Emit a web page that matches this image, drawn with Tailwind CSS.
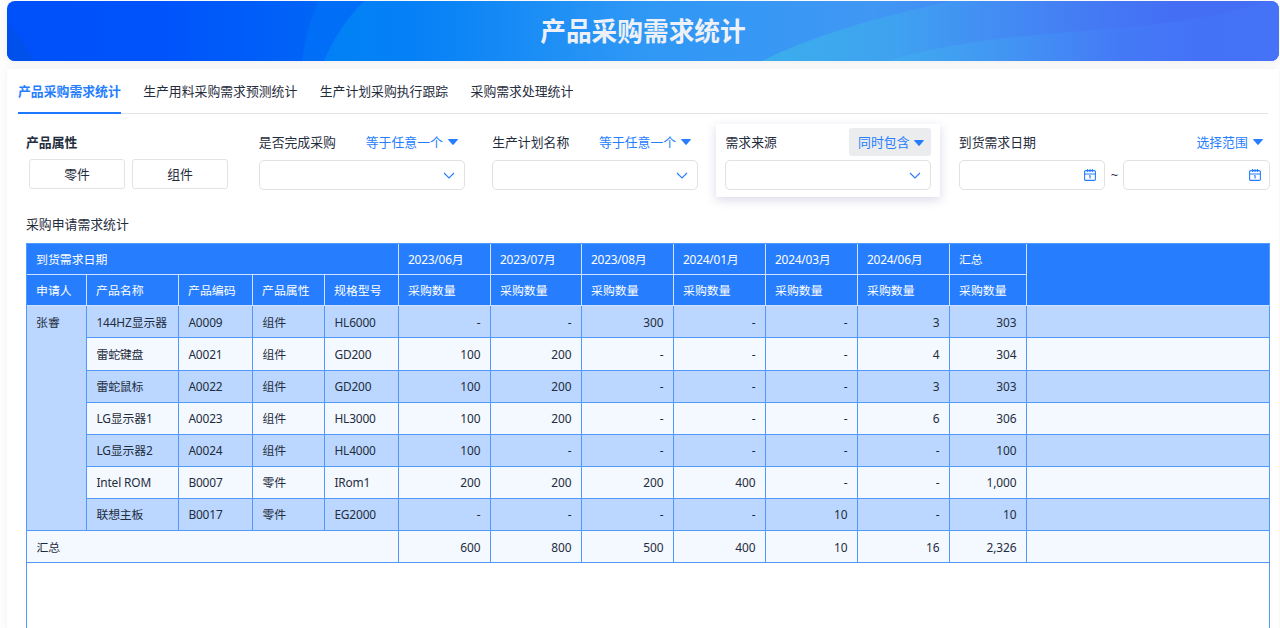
<!DOCTYPE html>
<html lang="zh-CN">
<head>
  <meta charset="UTF-8">
  <meta name="viewport" content="width=device-width, initial-scale=1.0">
  <title>产品采购需求统计</title>
  <script src="https://cdn.jsdelivr.net/npm/@tailwindcss/browser@4"></script>
</head>
<body class="h-[628px] overflow-hidden bg-[#fdfdfe] pl-[7px] pr-px pt-px text-[12.85px] text-[#1f2d3d] font-['Noto_Sans','Noto_Sans_CJK_SC',sans-serif]">
  <!-- banner -->
  <header class="relative flex h-[60px] items-center justify-center overflow-hidden rounded-lg shadow-[0_2px_8px_rgba(0,0,0,0.06)]">
    <svg class="absolute inset-0 h-full w-full" viewBox="0 0 1272 60" preserveAspectRatio="none">
      <defs>
        <linearGradient id="base" x1="0" x2="1" y1="0" y2="0">
          <stop offset="0" stop-color="#0050fa"/>
          <stop offset="0.12" stop-color="#0053fb"/>
          <stop offset="0.25" stop-color="#0066f6"/>
          <stop offset="0.34" stop-color="#0a84f6"/>
          <stop offset="0.5" stop-color="#2f98f5"/>
          <stop offset="0.68" stop-color="#4097f4"/>
          <stop offset="0.82" stop-color="#4481f4"/>
          <stop offset="0.92" stop-color="#446ef4"/>
          <stop offset="1" stop-color="#446ef4"/>
        </linearGradient>
        <linearGradient id="arc" gradientUnits="userSpaceOnUse" x1="295" x2="480" y1="0" y2="0">
          <stop offset="0" stop-color="#0080f7"/>
          <stop offset="0.4" stop-color="#0481f6"/>
          <stop offset="1" stop-color="#0a84f6" stop-opacity="0"/>
        </linearGradient>
        <linearGradient id="wave" gradientUnits="userSpaceOnUse" x1="745" x2="1060" y1="0" y2="0">
          <stop offset="0" stop-color="#3aafec"/>
          <stop offset="0.45" stop-color="#3fa2f0"/>
          <stop offset="1" stop-color="#448af4" stop-opacity="0"/>
        </linearGradient>
        <linearGradient id="wave2" gradientUnits="userSpaceOnUse" x1="870" x2="1272" y1="0" y2="0">
          <stop offset="0" stop-color="#3fadee"/>
          <stop offset="0.3" stop-color="#4297f3"/>
          <stop offset="0.6" stop-color="#447af6"/>
          <stop offset="0.8" stop-color="#4472f7"/>
          <stop offset="1" stop-color="#4473f7"/>
        </linearGradient>
      </defs>
      <rect width="1272" height="60" fill="url(#base)"/>
      <path d="M0 23Q17 40 27 60H0Z" fill="#0050ec"/>
      <path d="M311 0Q299 28 295 60H330L380 0Z" fill="#006ef6"/>
      <path d="M357 0Q331 26 317 60H480V0Z" fill="url(#arc)"/>
      <path d="M755 60Q822 26 945 0H1060V60Z" fill="url(#wave)"/>
      <path d="M880 60C930 45 980 38 1050 32C1130 26 1205 20 1260 0H1272V60Z" fill="url(#wave2)"/>
    </svg>
    <h1 class="relative pt-px text-[25.7px] font-bold leading-none text-[#eef0f7]">产品采购需求统计</h1>
  </header>

  <main class="mt-2 h-[559px] overflow-hidden bg-white shadow-[0_0_6px_rgba(0,0,0,0.05)]">
    <!-- tabs -->
    <nav class="ml-[11px] mr-[11px] flex h-[45px] gap-[22.4px] border-b border-[#e2e6ea]">
      <a class="h-[45px] shrink-0 border-b-2 border-[#1e78ff] pt-[12px] leading-5 font-bold text-[#267eff]">产品采购需求统计</a>
      <a class="shrink-0 pt-[12px] leading-5">生产用料采购需求预测统计</a>
      <a class="shrink-0 pt-[12px] leading-5">生产计划采购执行跟踪</a>
      <a class="shrink-0 pt-[12px] leading-5">采购需求处理统计</a>
    </nav>

    <!-- filters -->
    <section class="ml-[9.5px] mt-[10px] grid h-[73px] grid-cols-[224px_224px_224px_224px_329px] gap-x-[9.33px]">
      <div class="px-[9.5px] pt-1">
        <div class="flex h-7 items-center pt-px font-bold">产品属性</div>
        <div class="ml-[3px] mt-[3px] flex gap-[7px]">
          <button class="h-[30px] w-24 rounded-[3px] border border-[#e2e3e5] pt-px">零件</button>
          <button class="h-[30px] w-24 rounded-[3px] border border-[#e2e3e5] pt-px">组件</button>
        </div>
      </div>

      <div class="px-[9px] pt-1">
        <div class="flex h-7 items-center justify-between pt-px">
          <span>是否完成采购</span>
          <span class="flex items-center gap-[5px] pr-[7px] text-[#267eff]">等于任意一个
            <svg class="h-[6px] w-[10px]" viewBox="0 0 10 6"><path d="M0.6 0H9.4Q10.2 0.3 9.6 1L5.6 5.6Q5 6.2 4.4 5.6L0.4 1Q-0.2 0.3 0.6 0Z" fill="#267eff"/></svg>
          </span>
        </div>
        <div class="mt-1 flex h-[30px] items-center justify-end rounded-[5px] border border-[#e0e1e3] pr-[9px]">
          <svg class="h-[7px] w-3" viewBox="0 0 12 7" fill="none" stroke="#267eff" stroke-width="1.1"><path d="M1 1L6 6L11 1"/></svg>
        </div>
      </div>

      <div class="px-[9px] pt-1">
        <div class="flex h-7 items-center justify-between pt-px">
          <span>生产计划名称</span>
          <span class="flex items-center gap-[5px] pr-[7px] text-[#267eff]">等于任意一个
            <svg class="h-[6px] w-[10px]" viewBox="0 0 10 6"><path d="M0.6 0H9.4Q10.2 0.3 9.6 1L5.6 5.6Q5 6.2 4.4 5.6L0.4 1Q-0.2 0.3 0.6 0Z" fill="#267eff"/></svg>
          </span>
        </div>
        <div class="mt-1 flex h-[30px] items-center justify-end rounded-[5px] border border-[#e0e1e3] pr-[9px]">
          <svg class="h-[7px] w-3" viewBox="0 0 12 7" fill="none" stroke="#267eff" stroke-width="1.1"><path d="M1 1L6 6L11 1"/></svg>
        </div>
      </div>

      <!-- hovered filter -->
      <div class="bg-white px-[9px] pt-1 shadow-[0_3px_10px_rgba(60,40,120,0.18)]">
        <div class="flex h-7 items-center justify-between">
          <span class="pt-px">需求来源</span>
          <span class="flex h-7 items-center gap-[5px] rounded-[3px] bg-[#ebecee] pl-[9px] pr-[7px] pt-px text-[#267eff]">同时包含
            <svg class="h-[6px] w-[10px]" viewBox="0 0 10 6"><path d="M0.6 0H9.4Q10.2 0.3 9.6 1L5.6 5.6Q5 6.2 4.4 5.6L0.4 1Q-0.2 0.3 0.6 0Z" fill="#267eff"/></svg>
          </span>
        </div>
        <div class="mt-1 flex h-[30px] items-center justify-end rounded-[5px] border border-[#e0e1e3] pr-[9px]">
          <svg class="h-[7px] w-3" viewBox="0 0 12 7" fill="none" stroke="#267eff" stroke-width="1.1"><path d="M1 1L6 6L11 1"/></svg>
        </div>
      </div>

      <div class="px-[9px] pt-1">
        <div class="flex h-7 items-center justify-between pt-px">
          <span>到货需求日期</span>
          <span class="flex items-center gap-[5px] pr-[7px] text-[#267eff]">选择范围
            <svg class="h-[6px] w-[10px]" viewBox="0 0 10 6"><path d="M0.6 0H9.4Q10.2 0.3 9.6 1L5.6 5.6Q5 6.2 4.4 5.6L0.4 1Q-0.2 0.3 0.6 0Z" fill="#267eff"/></svg>
          </span>
        </div>
        <div class="mt-1 flex items-center justify-between">
          <div class="flex h-[30px] w-[146.5px] items-center justify-end rounded-[5px] border border-[#e0e1e3] pr-2">
            <svg class="h-3 w-3" viewBox="0 0 12 12" fill="none" stroke="#267eff" stroke-width="1.1"><rect x="0.6" y="1.6" width="10.8" height="9.8" rx="1.2"/><path d="M0.6 5H11.4M3.6 0V3M6 0V3M8.4 0V3M5 6.8H6.1V9.6"/></svg>
          </div>
          <span class="pt-px">~</span>
          <div class="flex h-[30px] w-[146.5px] items-center justify-end rounded-[5px] border border-[#e0e1e3] pr-2">
            <svg class="h-3 w-3" viewBox="0 0 12 12" fill="none" stroke="#267eff" stroke-width="1.1"><rect x="0.6" y="1.6" width="10.8" height="9.8" rx="1.2"/><path d="M0.6 5H11.4M3.6 0V3M6 0V3M8.4 0V3M5 6.8H6.1V9.6"/></svg>
          </div>
        </div>
      </div>
    </section>

    <!-- pivot table -->
    <h2 class="ml-[19px] mt-[17px] h-[29px] leading-5">采购申请需求统计</h2>
    <div class="ml-[19px] w-[1244px] border-l border-t border-[#5299ff]">
      <table class="w-[1243px] table-fixed border-separate border-spacing-0 text-left text-[11.9px] leading-4">
        <colgroup>
          <col class="w-[60px]"><col class="w-[92px]"><col class="w-[74px]"><col class="w-[72px]"><col class="w-[74px]">
          <col class="w-[92px]"><col class="w-[91px]"><col class="w-[92px]"><col class="w-[92px]"><col class="w-[92px]"><col class="w-[92px]"><col class="w-[77px]">
          <col class="w-[243px]">
        </colgroup>
        <thead id="head" class="bg-[#267eff] text-white"></thead>
        <tbody id="body"></tbody>
      </table>
      <div class="h-[70px] border-r border-[#5299ff]"></div>
    </div>
  </main>

  <script>
    const months = ['2023/06月', '2023/07月', '2023/08月', '2024/01月', '2024/03月', '2024/06月', '汇总'];
    const rows = [
      ['144HZ显示器', 'A0009', '组件', 'HL6000', '-', '-', '300', '-', '-', '3', '303'],
      ['雷蛇键盘', 'A0021', '组件', 'GD200', '100', '200', '-', '-', '-', '4', '304'],
      ['雷蛇鼠标', 'A0022', '组件', 'GD200', '100', '200', '-', '-', '-', '3', '303'],
      ['LG显示器1', 'A0023', '组件', 'HL3000', '100', '200', '-', '-', '-', '6', '306'],
      ['LG显示器2', 'A0024', '组件', 'HL4000', '100', '-', '-', '-', '-', '-', '100'],
      ['Intel ROM', 'B0007', '零件', 'IRom1', '200', '200', '200', '400', '-', '-', '1,000'],
      ['联想主板', 'B0017', '零件', 'EG2000', '-', '-', '-', '-', '10', '-', '10'],
    ];
    const totals = ['600', '800', '500', '400', '10', '16', '2,326'];

    const th = 'border-b border-r border-[#cfe1ff] pl-[9px] font-normal whitespace-nowrap';
    const thDate = 'border-b border-r border-[#cfe1ff] pl-[9px] font-normal whitespace-nowrap tracking-[-0.22px]';
    const td = 'border-b border-r border-[#5299ff] pl-[9.4px] py-0 whitespace-nowrap tracking-[-0.15px]';
    const num = 'border-b border-r border-[#5299ff] pr-[9.6px] py-0 text-right tracking-[-0.1px]';

    document.getElementById('head').innerHTML = `
      <tr class="h-[31px]">
        <th colspan="5" class="${th}">到货需求日期</th>
        ${months.map(m => `<th class="${thDate}">${m}</th>`).join('')}
        <th rowspan="2" class="border-b border-r border-b-[#cfe1ff] border-r-[#5299ff]"></th>
      </tr>
      <tr class="h-[31px]">
        ${['申请人', '产品名称', '产品编码', '产品属性', '规格型号'].map(t => `<th class="${th}">${t}</th>`).join('')}
        ${months.map(() => `<th class="${th}">采购数量</th>`).join('')}
      </tr>`;

    const body = rows.map((r, i) => `
      <tr class="${i === 1 ? 'h-[33px]' : 'h-[32px]'} ${i % 2 ? 'bg-[#f4f8ff]' : 'bg-[#bbd7ff]'}">
        ${i === 0 ? '<td rowspan="7" class="border-b border-r border-[#5299ff] pl-[9px] pt-2 align-top">张睿</td>' : ''}
        ${r.map((v, c) => `<td class="${c < 4 ? td : num}${i > 1 ? ' pb-px' : ''}">${v}</td>`).join('')}
        <td class="${td}"></td>
      </tr>`).join('');

    document.getElementById('body').innerHTML = body + `
      <tr class="h-[32px] bg-[#f4f8ff]">
        <td colspan="5" class="${td}">汇总</td>
        ${totals.map(v => `<td class="${num}">${v}</td>`).join('')}
        <td class="${td}"></td>
      </tr>`;
  </script>
</body>
</html>
